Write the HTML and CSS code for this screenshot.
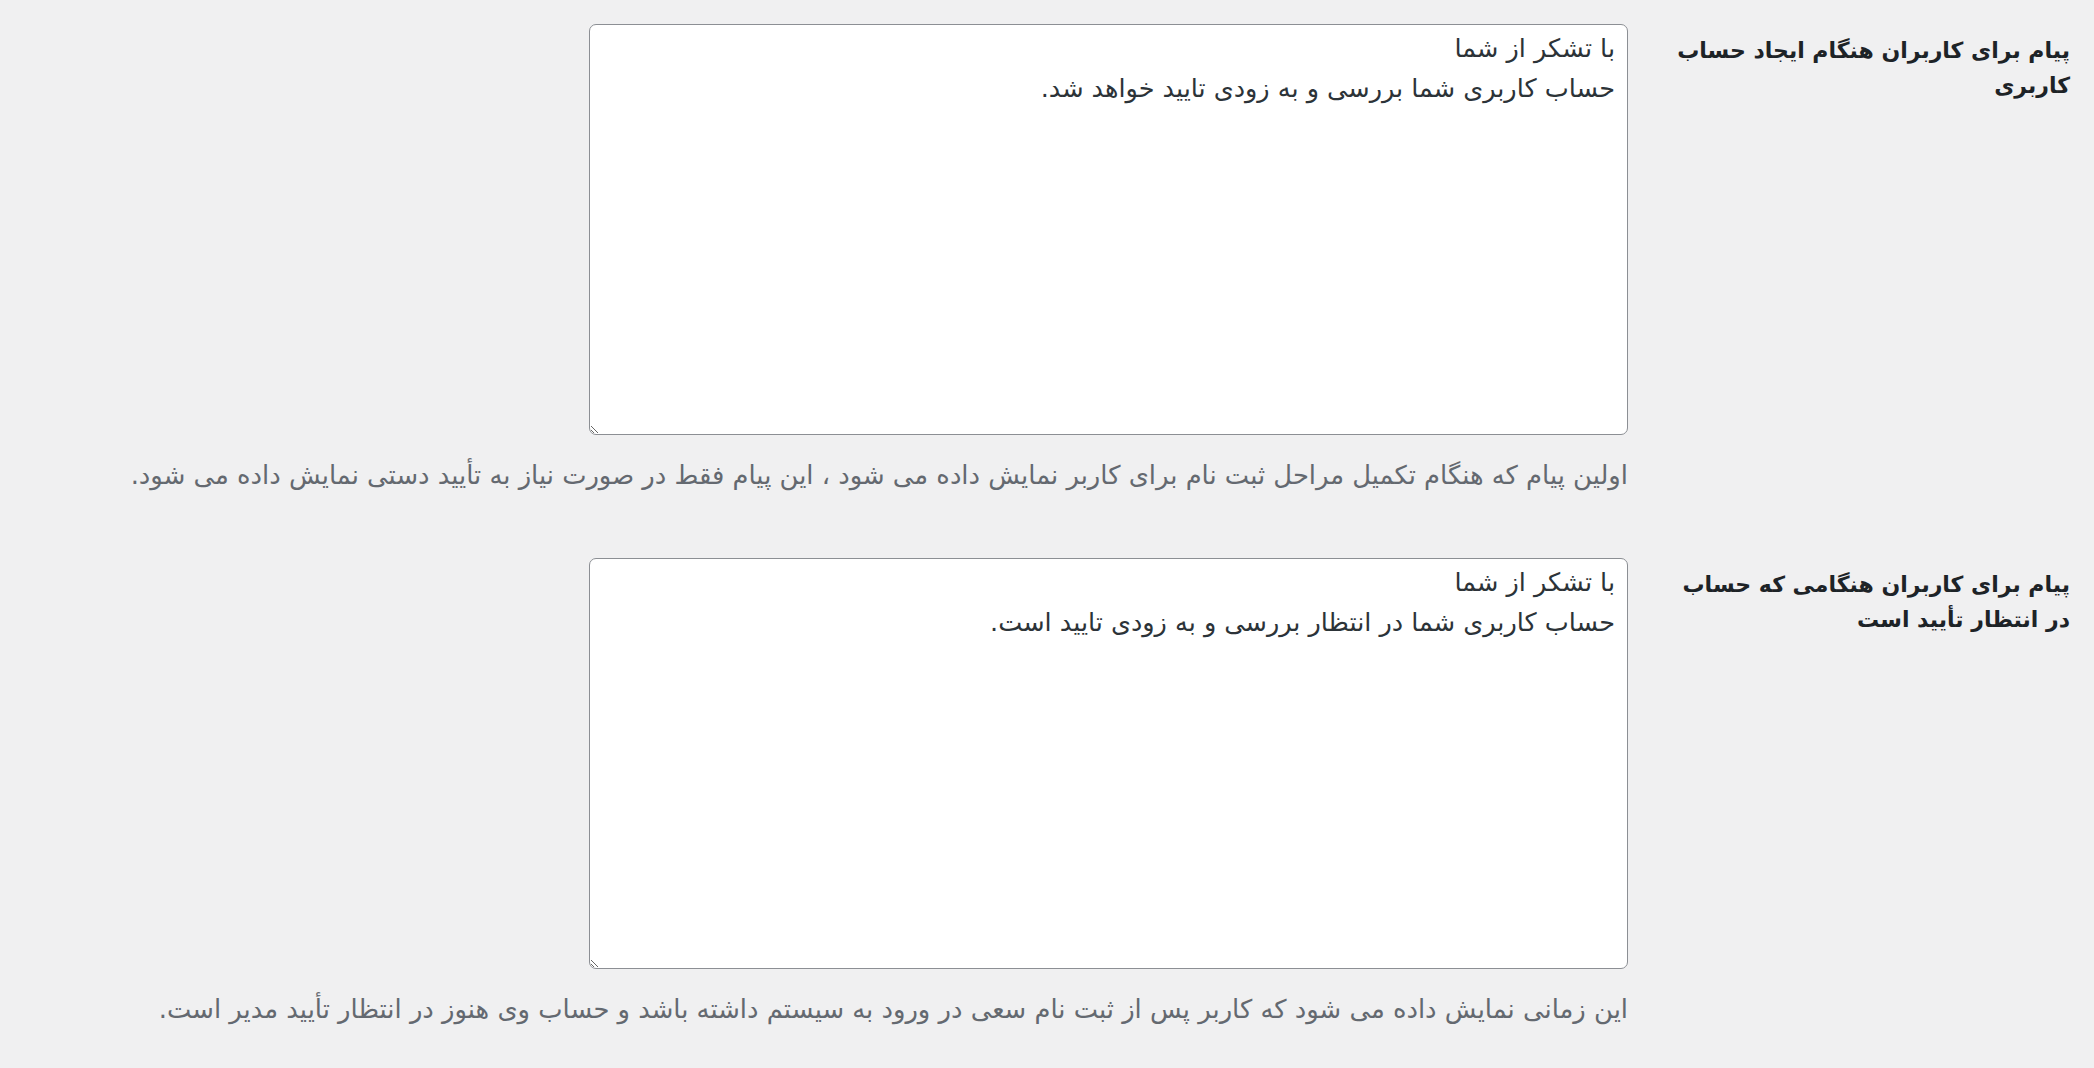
FILE: index.html
```html
<!DOCTYPE html>
<html lang="fa" dir="rtl">
<head>
<meta charset="utf-8">
<title>تنظیمات پیام</title>
<link rel="stylesheet" href="styles.css">
</head>
<body>
<div class="form-table">
  <div class="row">
    <div class="th"><label for="msg1">پیام برای کاربران هنگام ایجاد حساب کاربری</label></div>
    <div class="td">
      <textarea id="msg1" class="field" dir="rtl">با تشکر از شما
حساب کاربری شما بررسی و به زودی تایید خواهد شد.</textarea>
      <p class="description">اولین پیام که هنگام تکمیل مراحل ثبت نام برای کاربر نمایش داده می شود ، این پیام فقط در صورت نیاز به تأیید دستی نمایش داده می شود.</p>
    </div>
  </div>
  <div class="row">
    <div class="th"><label for="msg2">پیام برای کاربران هنگامی که حساب در انتظار تأیید است</label></div>
    <div class="td">
      <textarea id="msg2" class="field" dir="rtl">با تشکر از شما
حساب کاربری شما در انتظار بررسی و به زودی تایید است.</textarea>
      <p class="description">این زمانی نمایش داده می شود که کاربر پس از ثبت نام سعی در ورود به سیستم داشته باشد و حساب وی هنوز در انتظار تأیید مدیر است.</p>
    </div>
  </div>
</div>
</body>
</html>
```
FILE: styles.css
```css
html, body {
  margin: 0;
  padding: 0;
  background: #f0f0f1;
}
body {
  font-family: "DejaVu Sans", "Noto Sans", sans-serif;
  color: #1d2327;
  direction: rtl;
}
.form-table {
  padding: 24px 24px 0 0;
}
.row {
  display: flex;
  flex-direction: row;
  gap: 42px;
  margin-bottom: 67px;
}
.th {
  width: 400px;
  flex: none;
  padding-top: 10px;
  font-size: 22px;
  font-weight: bold;
  line-height: 34.5px;
  color: #1d2327;
}
.td {
  flex: 1;
  min-width: 0;
}
.field {
  display: block;
  box-sizing: border-box;
  width: 1039px;
  height: 411px;
  margin: 0;
  padding: 3px 12px;
  font-family: "DejaVu Sans", "Noto Sans", sans-serif;
  font-size: 25.5px;
  line-height: 40px;
  color: #2c3338;
  background: #fff;
  border: 1px solid #8c8f94;
  border-radius: 7px;
  resize: both;
  outline: none;
}
.description {
  margin: 24px 0 0 0;
  font-size: 25.8px;
  line-height: 32px;
  color: #646970;
  white-space: nowrap;
}
```
